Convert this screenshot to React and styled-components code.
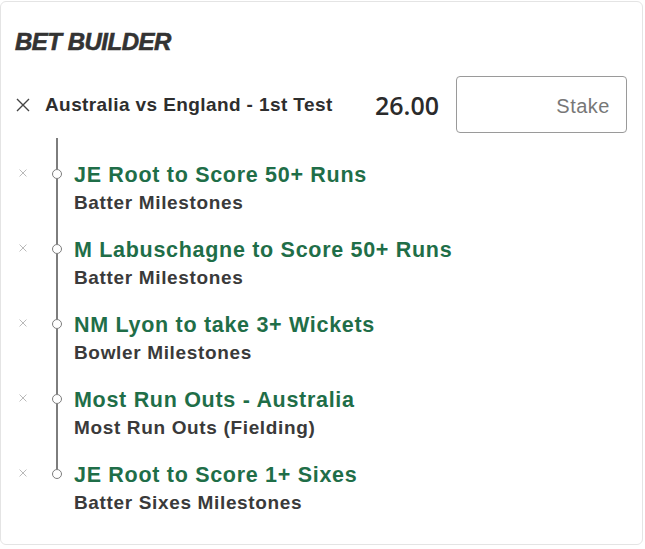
import styled, { createGlobalStyle } from "styled-components";

const GlobalStyle = createGlobalStyle`
  body {
    margin: 0;
    background: #ffffff;
    font-family: "Liberation Sans", Arial, sans-serif;
  }
`;

// outer card of the bet slip
const Card = styled.div`
  box-sizing: border-box;
  width: 643px;
  margin-top: 1px;
  padding: 26px 15px 31px 14px;
  background: #ffffff;
  border: 1px solid #e4e4e4;
  border-radius: 6px;
`;

const Heading = styled.h2`
  margin: 0;
  font-size: 24px;
  line-height: 28px;
  font-weight: 700;
  font-style: italic;
  letter-spacing: -0.5px;
  color: #333333;
  -webkit-text-stroke: 0.6px #333333;
`;

// event row: remove icon, match name, odds, stake input
const EventRow = styled.div`
  display: flex;
  align-items: center;
  margin-top: 20px;
  height: 57px;
`;

const CloseIcon = styled.svg`
  flex: none;
  width: ${(p) => p.$size}px;
  height: ${(p) => p.$size}px;
  color: ${(p) => p.$color};
`;

const EventClose = styled.span`
  display: flex;
  margin-left: 1px;
`;

const EventName = styled.div`
  flex: 1;
  margin-left: 15px;
  font-size: 19px;
  font-weight: 700;
  letter-spacing: 0.4px;
  color: #2e2e2e;
  white-space: nowrap;
`;

const Odds = styled.div`
  margin-right: 17px;
  font-family: "Open Sans", "Liberation Sans", sans-serif;
  font-size: 25px;
  font-weight: 600;
  color: #2b2b2b;
`;

const StakeBox = styled.div`
  box-sizing: border-box;
  width: 171px;
  height: 57px;
  display: flex;
  align-items: center;
  justify-content: flex-end;
  padding: 3px 16px 0 0;
  border: 1px solid #9a9a9a;
  border-radius: 4px;
  font-size: 20px;
  letter-spacing: 0.5px;
  color: #777777;
`;

// selections with the timeline rail
const List = styled.div`
  margin-top: 5px;
`;

const Item = styled.div`
  display: flex;
  height: 75px;
`;

const RemoveCell = styled.div`
  width: 16px;
  display: flex;
  justify-content: center;
  padding-top: 31px;
`;

const Rail = styled.div`
  width: 16px;
  margin-left: 18px;
  display: flex;
  flex-direction: column;
  align-items: center;
`;

const RailLine = styled.div`
  width: 2px;
  background: #7d7d7d;
  height: ${(p) => (p.$grow ? "auto" : "31px")};
  flex: ${(p) => (p.$grow ? 1 : "none")};
  visibility: ${(p) => (p.$hidden ? "hidden" : "visible")};
`;

const Dot = styled.div`
  box-sizing: border-box;
  flex: none;
  width: 10px;
  height: 10px;
  border: 1.5px solid #7d7d7d;
  border-radius: 50%;
  background: #ffffff;
`;

const Content = styled.div`
  margin-left: 9px;
  padding-top: 24px;
`;

const Title = styled.div`
  font-size: 21.5px;
  line-height: 26px;
  font-weight: 700;
  letter-spacing: 0.7px;
  color: #1f6e48;
  white-space: nowrap;
`;

const Market = styled.div`
  margin-top: 4px;
  font-size: 19px;
  line-height: 22px;
  font-weight: 700;
  letter-spacing: 0.65px;
  color: #3a3a3a;
  white-space: nowrap;
`;

const Cross = ({ size, color, width }) => (
  <CloseIcon $size={size} $color={color} viewBox="0 0 14 14">
    <path
      d="M1 1 L13 13 M13 1 L1 13"
      stroke="currentColor"
      strokeWidth={width}
      fill="none"
    />
  </CloseIcon>
);

const selections = [
  { title: "JE Root to Score 50+ Runs", market: "Batter Milestones" },
  { title: "M Labuschagne to Score 50+ Runs", market: "Batter Milestones" },
  { title: "NM Lyon to take 3+ Wickets", market: "Bowler Milestones" },
  { title: "Most Run Outs - Australia", market: "Most Run Outs (Fielding)" },
  { title: "JE Root to Score 1+ Sixes", market: "Batter Sixes Milestones" },
];

export default function App() {
  return (
    <>
      <GlobalStyle />
      <Card>
        <Heading>BET BUILDER</Heading>
        <EventRow>
          <EventClose>
            <Cross size={14} color="#444" width={1.4} />
          </EventClose>
          <EventName>Australia vs England - 1st Test</EventName>
          <Odds>26.00</Odds>
          <StakeBox>Stake</StakeBox>
        </EventRow>
        <List>
          {selections.map((s, i) => (
            <Item key={i}>
              <RemoveCell>
                <Cross size={8} color="#b3b3b3" width={1.6} />
              </RemoveCell>
              <Rail>
                <RailLine />
                <Dot />
                <RailLine $grow $hidden={i === selections.length - 1} />
              </Rail>
              <Content>
                <Title>{s.title}</Title>
                <Market>{s.market}</Market>
              </Content>
            </Item>
          ))}
        </List>
      </Card>
    </>
  );
}
